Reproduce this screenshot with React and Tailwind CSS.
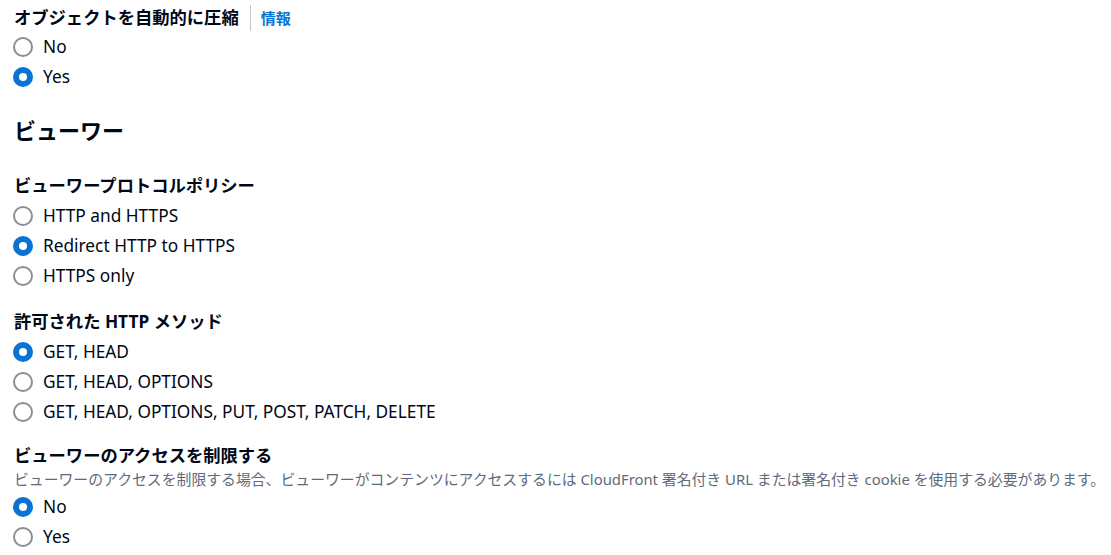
import React, { useState } from "react";

const font = { fontFamily: '"Noto Sans", "Noto Sans CJK JP", sans-serif' };

function Radio({ checked, label, onSelect }) {
  return (
    <label
      className="flex h-[30px] items-center cursor-pointer"
      onClick={onSelect}
    >
      <span
        className={
          checked
            ? "ml-[13px] flex h-[20px] w-[20px] items-center justify-center rounded-full bg-[#0972d3]"
            : "ml-[13px] h-[20px] w-[20px] rounded-full border-2 border-[#8c8c94] bg-white"
        }
      >
        {checked && <span className="h-[8px] w-[8px] rounded-full bg-white" />}
      </span>
      <span className="ml-[10px] text-[17.3px] text-[#000716]">{label}</span>
    </label>
  );
}

function Group({ options, initial }) {
  const [value, setValue] = useState(initial);
  return (
    <div>
      {options.map((o) => (
        <Radio
          key={o}
          label={o}
          checked={value === o}
          onSelect={() => setValue(o)}
        />
      ))}
    </div>
  );
}

export default function App() {
  return (
    <div className="min-h-screen bg-white pt-[6px]" style={font}>
      <div className="flex h-6 items-center pl-[14px]">
        <span className="text-[17.3px] font-bold text-[#000716]">
          オブジェクトを自動的に圧縮
        </span>
        <span className="ml-[11px] h-[26px] w-px bg-[#c6c6cd]" />
        <a href="#" className="ml-[10px] text-[15px] font-bold text-[#0972d3]">
          情報
        </a>
      </div>
      <div className="mt-[2px]">
        <Group options={["No", "Yes"]} initial="Yes" />
      </div>

      <h2 className="mt-[23px] h-[30px] pl-[14px] text-[22px] font-bold leading-[30px] text-[#000716]">
        ビューワー
      </h2>

      <div className="mt-[29px] h-6 pl-[14px] text-[17.3px] font-bold leading-6 text-[#000716]">
        ビューワープロトコルポリシー
      </div>
      <div className="mt-[3px]">
        <Group
          options={["HTTP and HTTPS", "Redirect HTTP to HTTPS", "HTTPS only"]}
          initial="Redirect HTTP to HTTPS"
        />
      </div>

      <div className="mt-[19px] h-6 pl-[14px] text-[17.3px] font-bold leading-6 text-[#000716]">
        許可された HTTP メソッド
      </div>
      <div className="mt-[3px]">
        <Group
          options={[
            "GET, HEAD",
            "GET, HEAD, OPTIONS",
            "GET, HEAD, OPTIONS, PUT, POST, PATCH, DELETE",
          ]}
          initial="GET, HEAD"
        />
      </div>

      <div className="mt-[17px] h-6 pl-[14px] text-[17.3px] font-bold leading-6 text-[#000716]">
        ビューワーのアクセスを制限する
      </div>
      <div className="h-[22px] whitespace-nowrap pl-[14px] text-[14.85px] leading-[22px] text-[#5f6b7a]">
        ビューワーのアクセスを制限する場合、ビューワーがコンテンツにアクセスするには CloudFront 署名付き URL または署名付き cookie を使用する必要があります。
      </div>
      <div className="mt-[2px]">
        <Group options={["No", "Yes"]} initial="No" />
      </div>
    </div>
  );
}
